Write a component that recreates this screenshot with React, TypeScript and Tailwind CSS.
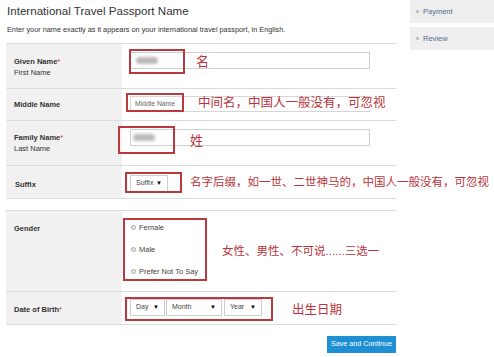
import React from "react";

const font = { fontFamily: '"Liberation Sans", Arial, "Noto Sans CJK SC", sans-serif' };

const RedBox = ({ className }: { className: string }) => (
  <div className={`absolute border-2 border-[#b83a3f] ${className}`} />
);

const Note = ({ className, children }: { className: string; children: React.ReactNode }) => (
  <div className={`absolute whitespace-nowrap text-[#b8343c] leading-none ${className}`}>{children}</div>
);

const Blur = () => <div className="h-[7px] w-[22px] rounded-sm bg-[#b9b9b9] blur-[1.5px]" />;

const Select = ({ label, className }: { label: string; className: string }) => (
  <div
    className={`flex h-[17px] items-center justify-between border border-[#cfcfcf] bg-white px-[5px] text-[7px] text-[#444] ${className}`}
  >
    <span>{label}</span>
    <span className="text-[6px] text-black">▼</span>
  </div>
);

const Radio = ({ label }: { label: string }) => (
  <div className="flex h-[9px] items-center gap-[3px] text-[7.5px] leading-[9px] text-[#444]">
    <span className="h-[5px] w-[5px] rounded-full border border-[#aaa] bg-[#e6e6e6]" />
    {label}
  </div>
);

const Label = ({ title, sub, req }: { title: string; sub?: string; req?: boolean }) => (
  <div className="text-[7.5px] leading-[11px] text-[#333]">
    <div className="font-bold">
      {title}
      {req && <span className="text-[#c33] font-normal">*</span>}
    </div>
    {sub && <div>{sub}</div>}
  </div>
);

export default function App() {
  return (
    <div style={font} className="relative h-[357px] w-[494px] overflow-hidden bg-white">
      <div className="flex">
        {/* main column */}
        <div className="w-[404px] pl-[6px]">
          <h1 className="pt-[4px] pl-[1px] text-[11.6px] leading-[14px] text-[#333]">International Travel Passport Name</h1>
          <p className="mt-[8px] pl-[1px] text-[7.3px] leading-[8px] text-[#333]">
            Enter your name exactly as it appears on your international travel passport, in English.
          </p>

          <div className="mt-[9px] w-[390px]">
            {/* Given name */}
            <div className="flex h-[45px] border-t border-[#dcdcdc]">
              <div className="w-[116px] bg-[#f1f1f1] pl-[8px] pt-[12px]">
                <Label title="Given Name" sub="First Name" req />
              </div>
              <div className="relative flex-1 pl-[8px] pt-[8px]">
                <div className="flex h-[17px] w-[240px] items-center border border-[#cfcfcf] pl-[5px]">
                  <Blur />
                </div>
                <RedBox className="left-[7px] top-[5px] h-[25px] w-[56px]" />
                <Note className="left-[74px] top-[11px] text-[13px]">名</Note>
              </div>
            </div>

            {/* Middle name */}
            <div className="flex h-[32px] border-t border-[#dcdcdc]">
              <div className="w-[116px] bg-[#f1f1f1] pl-[8px] pt-[10px]">
                <Label title="Middle Name" />
              </div>
              <div className="relative flex-1 pl-[8px] pt-[7px]">
                <div className="flex h-[16px] w-[240px] items-center border border-[#d6d6d6] pl-[4px] text-[6.8px] text-[#666]">
                  Middle Name
                </div>
                <RedBox className="left-[4px] top-[4px] h-[19px] w-[58px]" />
                <Note className="left-[76px] top-[8px] bg-white text-[12.5px]">中间名，中国人一般没有，可忽视</Note>
              </div>
            </div>

            {/* Family name */}
            <div className="flex h-[45px] border-t border-[#dcdcdc]">
              <div className="w-[116px] bg-[#f1f1f1] pl-[8px] pt-[11px]">
                <Label title="Family Name" sub="Last Name" req />
              </div>
              <div className="relative flex-1 pl-[8px] pt-[8px]">
                <div className="flex h-[17px] w-[240px] items-center border border-[#cfcfcf] pl-[2px]">
                  <Blur />
                </div>
                <RedBox className="left-[-4px] top-[5px] h-[28px] w-[57px]" />
                <Note className="left-[68px] top-[13px] text-[13px]">姓</Note>
              </div>
            </div>

            {/* Suffix */}
            <div className="flex h-[34px] border-y border-[#dcdcdc]">
              <div className="w-[116px] bg-[#f1f1f1] pl-[9px] pt-[13px]">
                <Label title="Suffix" />
              </div>
              <div className="relative flex-1 pl-[8px] pt-[9px]">
                <Select label="Suffix" className="w-[38px]" />
                <RedBox className="left-[3px] top-[6px] h-[21px] w-[57px]" />
                <Note className="left-[68px] top-[11px] text-[11.5px]">名字后缀，如一世、二世神马的，中国人一般没有，可忽视</Note>
              </div>
            </div>

            <div className="h-[11px]" />

            {/* Gender */}
            <div className="flex h-[81px] border-t border-[#dcdcdc]">
              <div className="w-[116px] bg-[#f1f1f1] pl-[8px] pt-[12px]">
                <Label title="Gender" />
              </div>
              <div className="relative flex flex-1 flex-col gap-[13px] pl-[9px] pt-[12px]">
                <Radio label="Female" />
                <Radio label="Male" />
                <Radio label="Prefer Not To Say" />
                <RedBox className="left-[1px] top-[7px] h-[63px] w-[84px]" />
                <Note className="left-[100px] top-[35px] text-[11.5px]">女性、男性、不可说......三选一</Note>
              </div>
            </div>

            {/* Date of birth */}
            <div className="flex h-[34px] border-y border-[#dcdcdc]">
              <div className="w-[116px] bg-[#f1f1f1] pl-[8px] pt-[12px]">
                <div className="text-[7.5px] font-bold leading-[11px] text-[#333]">
                  Date of Birth<span className="font-normal text-[#c33]">*</span>
                </div>
              </div>
              <div className="relative flex flex-1 gap-[1px] pl-[8px] pt-[7px]">
                <Select label="Day" className="w-[35px]" />
                <Select label="Month" className="w-[56px]" />
                <Select label="Year" className="ml-[1px] w-[38px]" />
                <RedBox className="left-[3px] top-[5px] h-[24px] w-[148px]" />
                <Note className="left-[170px] top-[12px] text-[12.5px]">出生日期</Note>
              </div>
            </div>

            <div className="mt-[11px] flex justify-end">
              <button className="h-[17px] w-[69px] bg-[#1e8fd3] text-[7.2px] text-white">Save and Continue</button>
            </div>
          </div>
        </div>

        {/* sidebar */}
        <div className="ml-[6px] flex w-[84px] flex-col gap-[4px]">
          <div className="flex h-[23px] items-center gap-[4px] bg-[#eeeeee] pl-[6px] text-[7.5px] text-[#4d6f92]">
            <span className="h-[3px] w-[3px] rounded-full border border-[#999]" />
            Payment
          </div>
          <div className="flex h-[23px] items-center gap-[4px] bg-[#eeeeee] pl-[6px] text-[7.5px] text-[#4d6f92]">
            <span className="h-[3px] w-[3px] rounded-full border border-[#999]" />
            Review
          </div>
        </div>
      </div>
    </div>
  );
}
